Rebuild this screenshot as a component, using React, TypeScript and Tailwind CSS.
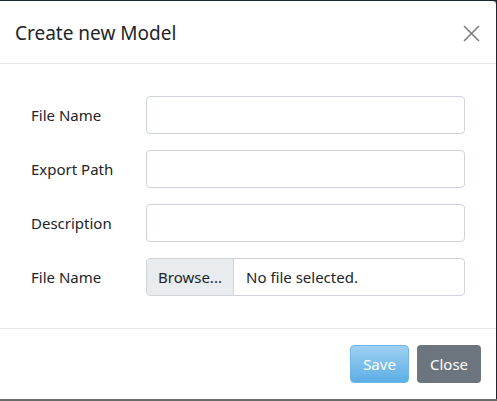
import React from 'react';

const font = { fontFamily: '"Noto Sans", "Open Sans", sans-serif' };

function Field({ label, children }: { label: string; children: React.ReactNode }) {
  return (
    <div className="flex items-center mb-4">
      <label className="w-[130px] pl-[15px] text-[15px] text-[#212529]">{label}</label>
      <div className="w-[319px]">{children}</div>
    </div>
  );
}

export default function App() {
  return (
    <div className="w-[497px] h-[401px] flex flex-col bg-[#6a6a6a] text-[#212529]" style={font}>
      <div className="h-px bg-[#1d2430]" />
      <div className="flex flex-1">
        <div className="flex-1 bg-white rounded-tr-[4px] flex flex-col">
          {/* header */}
          <div className="h-[63px] flex items-center justify-between pl-[15px] pr-[15px] border-b border-[#e5e5e5]">
            <h5 className="text-[19px] leading-none mt-[3px]">Create new Model</h5>
            <button className="w-5 h-5 flex items-center justify-center text-[#7d7d7d] mt-[2px]">
              <svg width="17" height="17" viewBox="0 0 17 17" fill="none" stroke="currentColor" strokeWidth="1.6">
                <path d="M1 1 L16 16 M16 1 L1 16" />
              </svg>
            </button>
          </div>
          {/* body */}
          <div className="pt-8 pb-4 pl-4 h-[265px] border-b border-[#e5e5e5]">
            <Field label="File Name">
              <input className="w-full h-[38px] rounded-[4px] border border-[#ced4da] bg-white outline-none" />
            </Field>
            <Field label="Export Path">
              <input className="w-full h-[38px] rounded-[4px] border border-[#ced4da] bg-white outline-none" />
            </Field>
            <Field label="Description">
              <input className="w-full h-[38px] rounded-[4px] border border-[#ced4da] bg-white outline-none" />
            </Field>
            <Field label="File Name">
              <div className="w-full h-[38px] rounded-[4px] border border-[#ced4da] flex overflow-hidden text-[15px]">
                <div className="w-[87px] bg-[#e9ecef] border-r border-[#ced4da] flex items-center pl-[11px]">Browse...</div>
                <div className="flex items-center pl-[12px]">No file selected.</div>
              </div>
            </Field>
          </div>
          {/* footer */}
          <div className="flex-1 flex items-center justify-end gap-2 pr-[15px]">
            <button className="w-[59px] h-[38px] rounded-[4px] text-white text-[15px] border border-[#6fb7e8] bg-gradient-to-b from-[#9fd0f1] to-[#5aaee6]">
              Save
            </button>
            <button className="w-[64px] h-[38px] rounded-[4px] text-white text-[15px] bg-[#6c757d]">
              Close
            </button>
          </div>
        </div>
        <div className="w-px bg-[#1d2430]" />
      </div>
      <div className="h-[2px] bg-[#6a6a6a]" />
    </div>
  );
}
